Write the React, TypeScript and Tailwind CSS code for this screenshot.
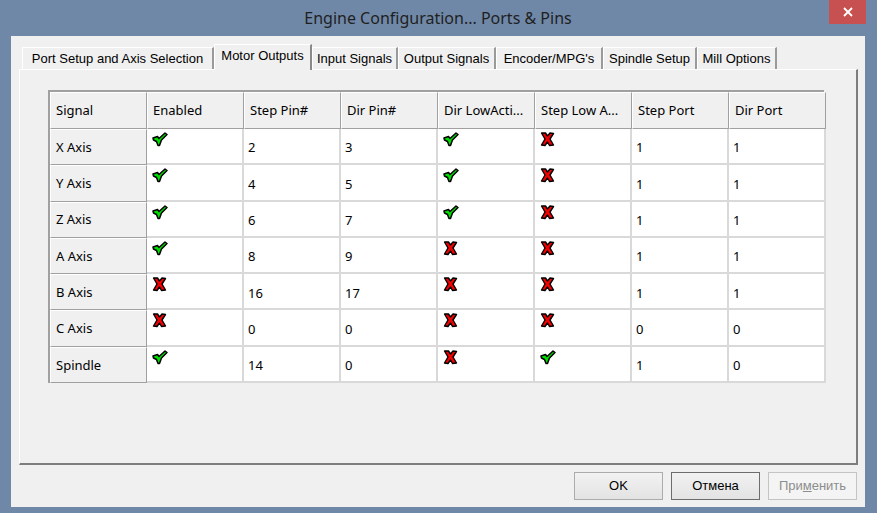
import React from "react";

type Cell = boolean | string;

const tabs: { label: string; w: string }[] = [
    { label: "Port Setup and Axis Selection", w: "w-[192px]" },
    { label: "Motor Outputs", w: "w-[98px]" },
    { label: "Input Signals", w: "w-[86px]" },
    { label: "Output Signals", w: "w-[98px]" },
    { label: "Encoder/MPG's", w: "w-[107px]" },
    { label: "Spindle Setup", w: "w-[94px]" },
    { label: "Mill Options", w: "w-[80px]" },
];

const headers = [
    "Signal",
    "Enabled",
    "Step Pin#",
    "Dir Pin#",
    "Dir LowActi...",
    "Step Low A...",
    "Step Port",
    "Dir Port",
];

const rows: { name: string; cells: Cell[] }[] = [
    { name: "X Axis", cells: [true, "2", "3", true, false, "1", "1"] },
    { name: "Y Axis", cells: [true, "4", "5", true, false, "1", "1"] },
    { name: "Z Axis", cells: [true, "6", "7", true, false, "1", "1"] },
    { name: "A Axis", cells: [true, "8", "9", false, false, "1", "1"] },
    { name: "B Axis", cells: [false, "16", "17", false, false, "1", "1"] },
    { name: "C Axis", cells: [false, "0", "0", false, false, "0", "0"] },
    { name: "Spindle", cells: [true, "14", "0", false, true, "1", "0"] },
];

function CheckIcon() {
    return (
        <svg width="16" height="15" viewBox="0 0 16 15">
            <path
                d="M1 6 L5.5 4.5 L7 6.5 L13 1 L15 2.5 L9.5 8 L7.5 13.5 L6 13.5 L4.5 9.5 L1.5 8 Z"
                fill="#00e000"
                stroke="#000"
                strokeWidth="1.5"
                strokeLinejoin="round"
            />
        </svg>
    );
}

function CrossIcon() {
    return (
        <svg width="15" height="15" viewBox="0 0 15 15">
            <path
                d="M1.5 1 L5.5 1 L7.5 4 L10 1 L13.5 1.5 L10 7 L13.5 13 L9.5 13.5 L7.5 10 L5 13.5 L1.5 13 L5 7 Z"
                fill="#f00000"
                stroke="#000"
                strokeWidth="1.4"
                strokeLinejoin="round"
            />
        </svg>
    );
}

function HeadCell({ children }: { children: React.ReactNode }) {
    return (
        <div className="flex items-center bg-[#f0f0f0] border-t border-l border-white border-r border-b border-r-[#a0a0a0] border-b-[#a0a0a0] pl-[5px] pt-[1px] text-[13px] text-black whitespace-nowrap overflow-hidden">
            {children}
        </div>
    );
}

function DataCell({ value }: { value: Cell }) {
    if (typeof value === "boolean") {
        return (
            <div className="bg-white border-r-2 border-b-2 border-[#d9d9d9] pl-[5px] pt-[3px]">
                {value ? <CheckIcon /> : <CrossIcon />}
            </div>
        );
    }
    return (
        <div className="flex items-center bg-white border-r-2 border-b-2 border-[#d9d9d9] pl-[4px] pt-[4px] text-[13px] text-black">
            {value}
        </div>
    );
}

function Button({
    label,
    focused,
    disabled,
}: {
    label: React.ReactNode;
    focused?: boolean;
    disabled?: boolean;
}) {
    return (
        <div
            className={
                "flex w-[89px] h-[28px] items-center justify-center border text-[13px] bg-gradient-to-b from-[#f2f2f2] to-[#e3e3e3] " +
                (focused
                    ? "border-[#6d6d6d] text-black"
                    : disabled
                      ? "border-[#c4c4c4] from-[#f4f4f4] to-[#f4f4f4] text-[#8d8d8d]"
                      : "border-[#acacac] text-black")
            }
        >
            {label}
        </div>
    );
}

export default function App() {
    return (
        <div
            className="flex w-[877px] h-[513px] flex-col bg-[#6f88a8] pl-[11px] pr-[12px] pb-[6px]"
            style={{ fontFamily: "'Liberation Sans', Arial, sans-serif" }}
        >
            <div className="relative flex h-[36px] items-center justify-center">
                <span
                    className="text-[16px] text-[#1f1f1f] pb-[1px]"
                    style={{ fontFamily: "'Noto Sans', sans-serif" }}
                >
                    Engine Configuration... Ports &amp; Pins
                </span>
                <div className="absolute top-0 right-[-1px] flex w-[37px] h-[24px] items-center justify-center bg-[#c75050]">
                    <svg width="10" height="10" viewBox="0 0 10 10">
                        <path
                            d="M1 1 L9 9 M9 1 L1 9"
                            stroke="#fff"
                            strokeWidth="1.8"
                        />
                    </svg>
                </div>
            </div>

            <div className="flex flex-1 flex-col bg-[#f0f0f0] pt-[8px] pl-[8px] pr-[7px] pb-[7px]">
                <div className="flex h-[25px] items-end pl-[3px]">
                    {tabs.map((t, i) =>
                        i === 1 ? (
                            <div
                                key={t.label}
                                className={
                                    "relative z-10 -mb-[1px] flex h-[26px] items-center justify-center bg-[#f0f0f0] border-l border-t border-white border-r-2 border-r-[#8a8a8a] pb-[4px] text-[13px] text-black whitespace-nowrap " +
                                    t.w
                                }
                            >
                                {t.label}
                            </div>
                        ) : (
                            <div
                                key={t.label}
                                className={
                                    "flex h-[22px] items-center justify-center bg-[#f0f0f0] border-l border-t border-white border-r-2 border-r-[#9a9a9a] pt-[1px] text-[13px] text-black whitespace-nowrap " +
                                    t.w
                                }
                            >
                                {t.label}
                            </div>
                        ),
                    )}
                </div>

                <div className="h-[396px] border-t border-l border-white border-r-2 border-b-2 border-r-[#7d7d7d] border-b-[#7d7d7d] pl-[28px] pt-[20px]">
                    <div
                        className="grid w-[776px] grid-cols-[repeat(8,97px)] grid-rows-[37px_repeat(7,36.3px)] border-t-2 border-l-2 border-[#a0a0a0]"
                        style={{ fontFamily: "'Noto Sans', sans-serif" }}
                    >
                        {headers.map((h) => (
                            <HeadCell key={h}>{h}</HeadCell>
                        ))}
                        {rows.map((r) => (
                            <React.Fragment key={r.name}>
                                <HeadCell>{r.name}</HeadCell>
                                {r.cells.map((c, j) => (
                                    <DataCell key={j} value={c} />
                                ))}
                            </React.Fragment>
                        ))}
                    </div>
                </div>

                <div className="mt-[7px] flex justify-end gap-[8px] pr-[1px]">
                    <Button label="OK" />
                    <Button label="Отмена" focused />
                    <Button
                        label={
                            <span>
                                При<span className="underline">м</span>енить
                            </span>
                        }
                        disabled
                    />
                </div>
            </div>
        </div>
    );
}
